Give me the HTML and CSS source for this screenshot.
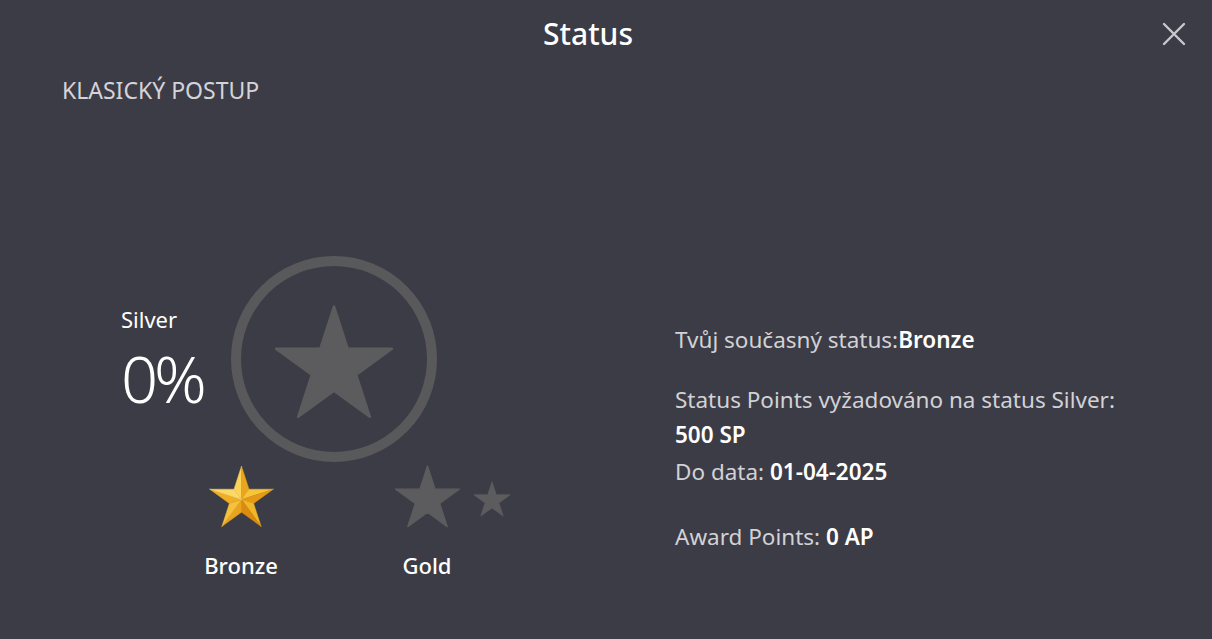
FILE: index.html
```html
<!DOCTYPE html>
<html lang="cs">
<head>
<meta charset="utf-8">
<title>Status</title>
<link rel="stylesheet" href="styles.css">
</head>
<body>
<div class="dialog">
  <header class="header">
    <h1 class="title">Status</h1>
    <button class="close" aria-label="Zavřít">
      <svg width="24" height="24" viewBox="0 0 24 24"><path d="M2 2 L22 22 M22 2 L2 22" stroke="#c9c9cd" stroke-width="2.4" stroke-linecap="round" fill="none"/></svg>
    </button>
  </header>
  <div class="section-label">KLASICKÝ POSTUP</div>
  <div class="main">
    <div class="left">
      <div class="progress-row">
        <div class="progress">
          <div class="next-level">Silver</div>
          <div class="percent">0%</div>
        </div>
        <div class="ring">
          <svg class="ring-star" width="122" height="114" viewBox="-50 -50 100 91"><polygon points="0,-50 11.23,-15.45 47.55,-15.45 18.16,5.9 29.39,40.45 0,19.1 -29.39,40.45 -18.16,5.9 -47.55,-15.45 -11.23,-15.45" fill="#5c5c5e" stroke="#5c5c5e" stroke-width="2" stroke-linejoin="round"/></svg>
        </div>
      </div>
      <div class="badges">
        <div class="badge bronze">
          <div class="badge-icons">
            <svg width="67" height="63" viewBox="-50 -50 100 91">
              <g stroke-linejoin="round" stroke-width="0.6">
                <polygon points="0,0 0,-50 -11.23,-15.45" fill="#fbd45a" stroke="#fbd45a"/>
                <polygon points="0,0 0,-50 11.23,-15.45" fill="#eaa51c" stroke="#eaa51c"/>
                <polygon points="0,0 11.23,-15.45 47.55,-15.45" fill="#f8c43a" stroke="#f8c43a"/>
                <polygon points="0,0 47.55,-15.45 18.16,5.9" fill="#e59a16" stroke="#e59a16"/>
                <polygon points="0,0 18.16,5.9 29.39,40.45" fill="#f3b629" stroke="#f3b629"/>
                <polygon points="0,0 29.39,40.45 0,19.1" fill="#d98c10" stroke="#d98c10"/>
                <polygon points="0,0 0,19.1 -29.39,40.45" fill="#e8a41d" stroke="#e8a41d"/>
                <polygon points="0,0 -29.39,40.45 -18.16,5.9" fill="#f6c23c" stroke="#f6c23c"/>
                <polygon points="0,0 -18.16,5.9 -47.55,-15.45" fill="#efae24" stroke="#efae24"/>
                <polygon points="0,0 -47.55,-15.45 -11.23,-15.45" fill="#fcd866" stroke="#fcd866"/>
              </g>
            </svg>
          </div>
          <div class="badge-label">Bronze</div>
        </div>
        <div class="badge gold">
          <div class="badge-icons">
            <svg width="67" height="63" viewBox="-50 -50 100 91"><polygon points="0,-50 11.23,-15.45 47.55,-15.45 18.16,5.9 29.39,40.45 0,19.1 -29.39,40.45 -18.16,5.9 -47.55,-15.45 -11.23,-15.45" fill="#5c5c5e" stroke="#5c5c5e" stroke-width="2" stroke-linejoin="round"/></svg>
            <svg class="small-star" width="38" height="36" viewBox="-50 -50 100 91"><polygon points="0,-50 11.23,-15.45 47.55,-15.45 18.16,5.9 29.39,40.45 0,19.1 -29.39,40.45 -18.16,5.9 -47.55,-15.45 -11.23,-15.45" fill="#5c5c5e" stroke="#5c5c5e" stroke-width="2" stroke-linejoin="round"/></svg>
          </div>
          <div class="badge-label">Gold</div>
        </div>
      </div>
    </div>
    <div class="right">
      <p class="info">Tvůj současný status:<strong>Bronze</strong></p>
      <p class="info info-spaced">Status Points vyžadováno na status Silver:<br><strong>500 SP</strong></p>
      <p class="info info-date">Do data: <strong>01-04-2025</strong></p>
      <p class="info info-spaced2">Award Points: <strong>0 AP</strong></p>
    </div>
  </div>
</div>
</body>
</html>
```

FILE: styles.css
```css
* { box-sizing: border-box; }
html, body {
  margin: 0;
  padding: 0;
  background: #3c3c46;
  height: 100%;
}
body {
  font-family: "Noto Sans", "Open Sans", sans-serif;
  color: #ffffff;
}
.dialog {
  width: 1212px;
  height: 639px;
  position: relative;
}
.header {
  height: 68px;
  display: flex;
  align-items: center;
  justify-content: center;
  padding-right: 36px;
}
.title {
  margin: 0;
  font-size: 30px;
  font-weight: 500;
  color: #ffffff;
  line-height: 1;
}
.close {
  position: absolute;
  top: 21px;
  right: 25px;
  width: 26px;
  height: 26px;
  padding: 1px;
  border: none;
  background: transparent;
  cursor: pointer;
}
.section-label {
  padding-left: 62px;
  margin-top: 7px;
  font-size: 23px;
  line-height: 30px;
  color: #d4d4d8;
}
.main {
  display: flex;
  padding-top: 151px;
}
.left {
  width: 675px;
  padding-left: 121px;
}
.progress-row {
  display: flex;
  align-items: center;
  gap: 32px;
}
.progress {
  width: 78px;
  padding-top: 8px;
}
.next-level {
  font-size: 22px;
  line-height: 30px;
}
.percent {
  font-size: 65px;
  font-weight: 300;
  line-height: 88px;
  letter-spacing: -4px;
}
.ring {
  width: 206px;
  height: 206px;
  border: 10px solid #59595b;
  border-radius: 50%;
  display: flex;
  align-items: center;
  justify-content: center;
}
.ring-star {
  margin-top: 6px;
}
.badges {
  display: flex;
  margin-top: 1px;
  margin-left: 45px;
}
.badge {
  width: 150px;
  display: flex;
  flex-direction: column;
  align-items: center;
}
.gold {
  margin-left: 36px;
}
.badge-icons {
  height: 66px;
  display: flex;
  align-items: center;
}
.small-star {
  margin-left: 12px;
  margin-right: -50px;
  margin-top: 6px;
}
.badge-label {
  margin-top: 21px;
  font-size: 22px;
  font-weight: 500;
  line-height: 30px;
}
.right {
  padding-top: 66px;
}
.info {
  margin: 0;
  font-size: 22.5px;
  line-height: 35px;
  color: #d2d2d6;
}
.info strong {
  color: #ffffff;
  font-weight: 560;
}
.info-spaced {
  margin-top: 25px;
}
.info-date {
  margin-top: 2px;
}
.info-spaced2 {
  margin-top: 30px;
}
```
